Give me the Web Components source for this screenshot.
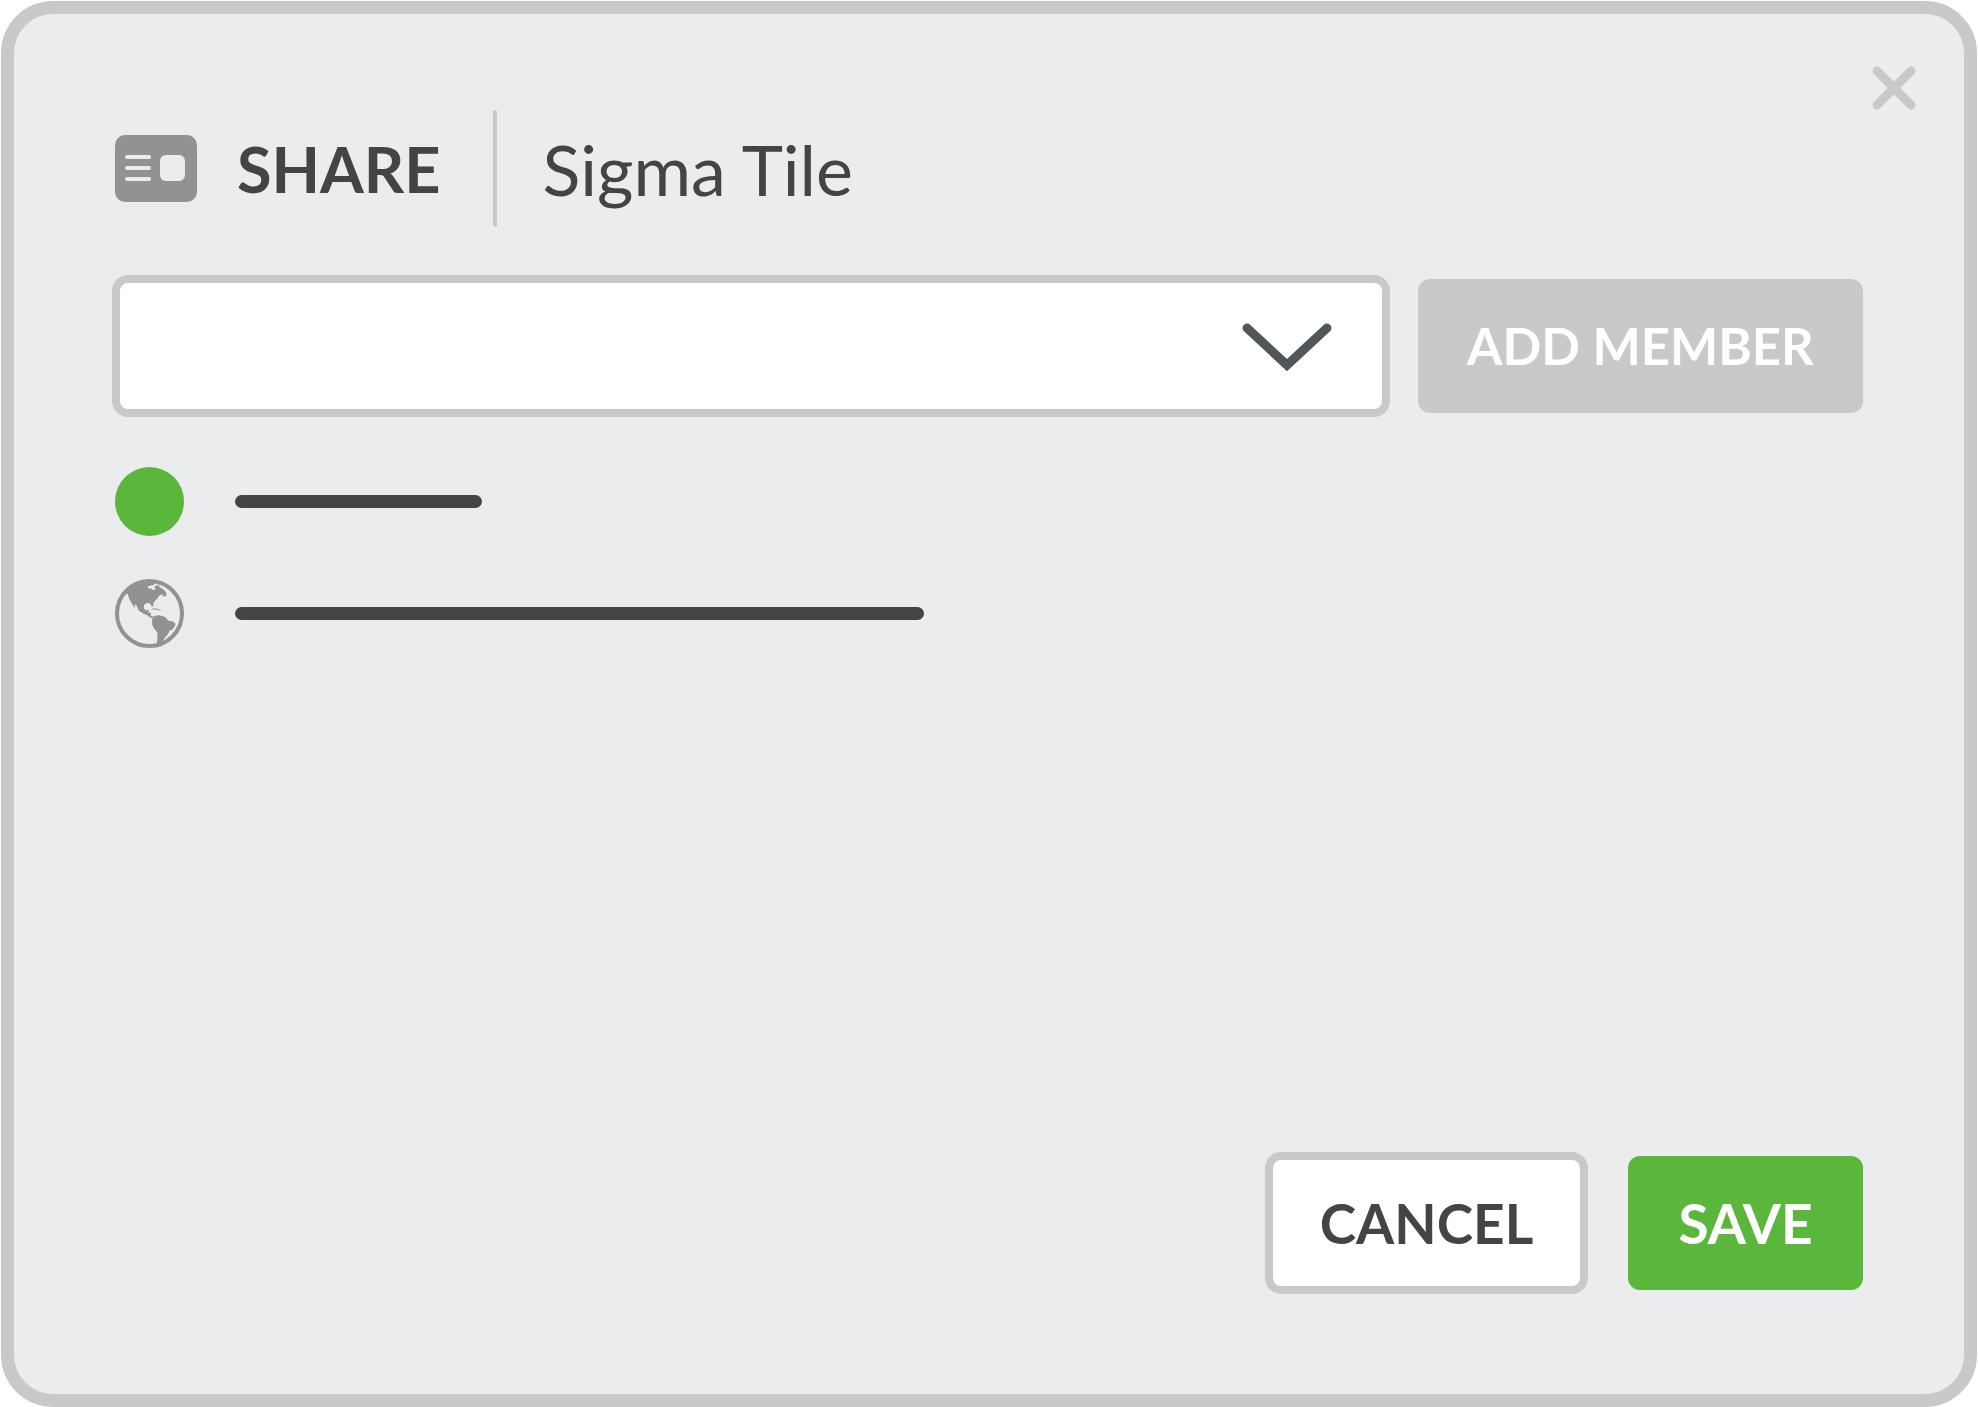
<!DOCTYPE html>
<html lang="en">
<head>
<meta charset="utf-8">
<meta name="viewport" content="width=device-width, initial-scale=1">
<title>Share</title>
<style>
  body {
    margin: 0;
    padding: 1px 1px 0;
    background: #fff;
    color: #444;
    font-family: "Century Gothic", Lato, sans-serif;
    --line: #c9c9c9;
    --panel: #eaecee;
    --icon: #929292;
    --green: #5bb73b;
  }
</style>
</head>
<body>
<share-dialog>
  <dialog-title slot="title" action="SHARE">Sigma Tile</dialog-title>
  <member-picker slot="picker"></member-picker>
  <action-button slot="picker" kind="muted" style="--width: 445px">ADD MEMBER</action-button>
  <member-row style="--length: 247px"><user-dot></user-dot></member-row>
  <member-row style="--length: 689px"><globe-icon></globe-icon></member-row>
  <action-button slot="actions" kind="outline" style="--width: 323px">CANCEL</action-button>
  <action-button slot="actions" kind="primary" style="--width: 235px">SAVE</action-button>
</share-dialog>

<script>
class ShareDialog extends HTMLElement {
  constructor() {
    super();

    this.attachShadow({mode: 'open'});
  }

  connectedCallback() {
    this.shadowRoot.innerHTML = `
      <style>
        :host {
          box-sizing: border-box;
          position: relative;
          display: flex;
          flex-direction: column;
          min-height: calc(100vh - 1px);
          padding: 96px 101px 100px 98px;
          border: 13px solid var(--line);
          border-radius: 52px;
          background: var(--panel);
        }
        .picker {
          display: flex;
          align-items: center;
          gap: 28px;
          margin-top: 48px;
        }
        .members {
          display: grid;
          gap: 43px;
          margin: 50px 0 48px;
          padding-left: 3px;
        }
        .actions {
          display: flex;
          justify-content: flex-end;
          align-items: center;
          gap: 40px;
          margin-top: auto;
        }
        .close {
          all: unset;
          position: absolute;
          top: 52px;
          right: 48px;
          width: 44px;
          height: 44px;
          cursor: pointer;
        }
        svg {
          display: block;
          stroke: var(--line);
          stroke-width: 9;
          stroke-linecap: round;
        }
      </style>
      <slot name="title"></slot>
      <div class="picker"><slot name="picker"></slot></div>
      <div class="members"><slot></slot></div>
      <div class="actions"><slot name="actions"></slot></div>
      <button class="close" type="button" aria-label="Close">
        <svg width="44" height="44" viewBox="0 0 44 44"><path d="M5 5L39 39M39 5L5 39"/></svg>
      </button>
    `;
  }
}

class DialogTitle extends HTMLElement {
  constructor() {
    super();

    this.attachShadow({mode: 'open'});
  }

  connectedCallback() {
    this.shadowRoot.innerHTML = `
      <style>
        :host {
          display: flex;
          align-items: center;
          padding-left: 3px;
          font-size: 70px;
          line-height: 80px;
        }
        svg {
          display: block;
          margin-right: 40px;
        }
        h1 {
          display: flex;
          align-items: center;
          margin: 0;
          font-size: inherit;
          font-weight: 400;
        }
        b {
          font-size: 63px;
        }
        .rule {
          width: 4px;
          height: 117px;
          margin: 0 46px 0 52px;
          border-radius: 2px;
          background: var(--line);
        }
      </style>
      <svg width="82" height="67" viewBox="0 0 82 67" fill="var(--panel)">
        <rect width="82" height="67" rx="10" fill="var(--icon)"/>
        <rect x="10" y="20" width="26" height="4" rx="2"/>
        <rect x="10" y="31" width="26" height="4" rx="2"/>
        <rect x="10" y="42" width="26" height="4" rx="2"/>
        <rect x="45" y="20" width="25" height="26" rx="6"/>
      </svg>
      <h1><b></b><span class="rule"></span><slot></slot></h1>
    `;
    this.shadowRoot.querySelector('b').textContent = this.getAttribute('action');
  }
}

class MemberPicker extends HTMLElement {
  constructor() {
    super();

    this.attachShadow({mode: 'open'});
  }

  connectedCallback() {
    this.shadowRoot.innerHTML = `
      <style>
        :host {
          position: relative;
          display: block;
          flex: 1;
        }
        select {
          appearance: none;
          box-sizing: border-box;
          display: block;
          width: 100%;
          height: 142px;
          padding: 0 150px 0 32px;
          border: 8px solid var(--line);
          border-radius: 16px;
          background: #fff;
          color: inherit;
          font: 51px/66px "Century Gothic", Lato, sans-serif;
        }
        svg {
          position: absolute;
          top: 48px;
          right: 58px;
          fill: none;
          stroke: #4f575a;
          stroke-width: 9;
          stroke-linecap: round;
          pointer-events: none;
        }
      </style>
      <select aria-label="Member"><option value=""></option></select>
      <svg width="90" height="50" viewBox="0 0 90 50"><path d="M5 5L45 42L85 5"/></svg>
    `;
  }
}

class ActionButton extends HTMLElement {
  constructor() {
    super();

    this.attachShadow({mode: 'open'});
  }

  connectedCallback() {
    this.shadowRoot.innerHTML = `
      <style>
        :host {
          display: block;
          flex: none;
        }
        button {
          box-sizing: border-box;
          display: block;
          min-width: var(--width);
          height: 134px;
          padding: 0 24px;
          border: 0;
          border-radius: 12px;
          background: var(--line);
          color: #fff;
          font: 700 55px/66px "Century Gothic", Lato, sans-serif;
          white-space: nowrap;
          cursor: pointer;
        }
        :host([kind="muted"]) button {
          font-size: 51px;
        }
        :host([kind="primary"]) button {
          background: var(--green);
        }
        :host([kind="outline"]) button {
          height: 142px;
          border: 8px solid var(--line);
          border-radius: 16px;
          background: #fff;
          color: #444;
        }
      </style>
      <button type="button"><slot></slot></button>
    `;
  }
}

class MemberRow extends HTMLElement {
  constructor() {
    super();

    this.attachShadow({mode: 'open'});
  }

  connectedCallback() {
    this.shadowRoot.innerHTML = `
      <style>
        :host {
          display: flex;
          align-items: center;
          gap: 51px;
        }
        .name {
          width: var(--length);
          height: 13px;
          border-radius: 7px;
          background: #444;
        }
      </style>
      <slot></slot>
      <div class="name"></div>
    `;
  }
}

class UserDot extends HTMLElement {
  constructor() {
    super();

    this.attachShadow({mode: 'open'});
    this.shadowRoot.innerHTML = `
      <style>
        :host {
          display: block;
          width: 69px;
          height: 69px;
          border-radius: 50%;
          background: var(--green);
        }
      </style>
    `;
  }
}

class GlobeIcon extends HTMLElement {
  constructor() {
    super();

    this.attachShadow({mode: 'open'});
    this.shadowRoot.innerHTML = `
      <style>
        :host {
          display: block;
        }
        svg {
          display: block;
          fill: var(--icon);
        }
      </style>
      <svg width="69" height="69" viewBox="31 26 208 208">
        <circle cx="135" cy="130" r="98" fill="none" stroke="var(--icon)" stroke-width="12"/>
        <path d="M62 68L70 72L73 84L81 98L91 115L90 103L96 106L103 122L116 130L130 136L137 143L147 143L148 139L139 137L139 127L132 127L133 119L124 121L118 114L119 103L128 98L137 100L142 110L147 108L147 97L159 85L163 77L175 71L174 79L186 77L185 67L177 57L165 50L162 44L153 46L150 52L154 57L146 60L141 55L131 55L130 48L147 44L152 38L160 36L135 27L100 33Z"/>
        <path d="M141 117Q154 109 171 122Q160 121 155 118Q148 116 141 119Z"/>
        <path d="M143 146Q149 136 160 135Q174 134 185 143L191 151L205 154Q214 158 213 165L204 179L195 182Q192 194 184 200L174 214L190 209L178 223L156 228L159 202L159 187Q146 176 143 162Z"/>
      </svg>
    `;
  }
}

customElements.define('share-dialog', ShareDialog);
customElements.define('dialog-title', DialogTitle);
customElements.define('member-picker', MemberPicker);
customElements.define('action-button', ActionButton);
customElements.define('member-row', MemberRow);
customElements.define('user-dot', UserDot);
customElements.define('globe-icon', GlobeIcon);
</script>
</body>
</html>
